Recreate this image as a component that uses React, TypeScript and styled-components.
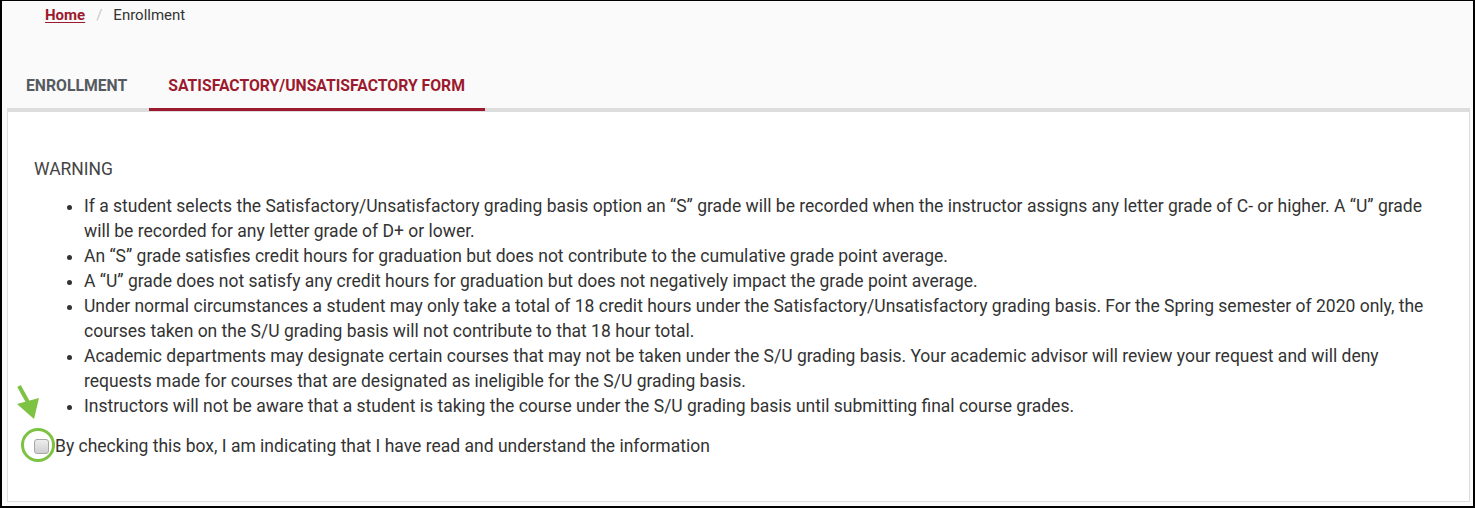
import { useState } from "react"
import styled, { createGlobalStyle } from "styled-components"

const GlobalStyle = createGlobalStyle`
	html, body {
		margin: 0;
		padding: 0;
		background: #ffffff;
	}
	* {
		box-sizing: border-box;
	}
`

const Frame = styled.div`
	position: relative;
	width: 1475px;
	height: 508px;
	border: 2px solid #000;
	border-top-width: 1px;
	background-color: #fafafa;
	font-family: Roboto, "Liberation Sans", sans-serif;
	overflow: hidden;
`
const Breadcrumb = styled.nav`
	display: flex;
	align-items: center;
	height: 28px;
	padding-left: 43px;
	font-size: 15px;
	color: #333;
`
const CrumbLink = styled.a`
	color: #9c1a2e;
	font-weight: 700;
	text-decoration: underline;
	text-underline-offset: 2px;
`
const Separator = styled.span`
	color: #c8c8c8;
	margin: 0 11px;
`
const TabList = styled.div`
	display: flex;
	gap: 2px;
	margin: 36px 3px 0 5px;
	border-bottom: 4px solid #dddddd;
`
const Tab = styled.div<{ $active?: boolean }>`
	padding: 0 20px 2px 19px;
	height: 46px;
	display: flex;
	align-items: center;
	font-size: 15.75px;
	font-weight: 700;
	color: ${(p) => (p.$active ? "#9c1a2e" : "#555a5f")};
	margin-bottom: -3px;
	border-bottom: 3px solid ${(p) => (p.$active ? "#9c1a2e" : "transparent")};
	cursor: pointer;
`
const Panel = styled.div`
	margin: 0 3px 0 5px;
	height: 390px;
	background: #ffffff;
	border: 1px solid #dddddd;
	border-top: none;
	padding: 45px 26px 0 26px;
	font-size: 17.5px;
	line-height: 25px;
	color: #333;
`
const Heading = styled.div`
	color: #444;
`
const List = styled.ul`
	margin: 12px 0 0 0;
	padding-left: 50px;
`
const Item = styled.li`
	padding: 0;
`
const CheckRow = styled.label`
	display: flex;
	align-items: center;
	margin-top: 15px;
	gap: 6px;
	cursor: pointer;
`
const Box = styled.input`
	appearance: none;
	margin: 0;
	width: 15px;
	height: 15px;
	border: 1px solid #a6a6a6;
	border-radius: 3px;
	background: linear-gradient(#ededed, #cfcfcf);
	&:checked {
		background: linear-gradient(#d7d7d7, #bdbdbd);
	}
`
const Annotation = styled.svg`
	position: absolute;
	left: -2px;
	top: 379px;
	pointer-events: none;
`

const items = [
	"If a student selects the Satisfactory/Unsatisfactory grading basis option an \u201cS\u201d grade will be recorded when the instructor assigns any letter grade of C- or higher. A \u201cU\u201d grade will be recorded for any letter grade of D+ or lower.",
	"An \u201cS\u201d grade satisfies credit hours for graduation but does not contribute to the cumulative grade point average.",
	"A \u201cU\u201d grade does not satisfy any credit hours for graduation but does not negatively impact the grade point average.",
	"Under normal circumstances a student may only take a total of 18 credit hours under the Satisfactory/Unsatisfactory grading basis. For the Spring semester of 2020 only, the courses taken on the S/U grading basis will not contribute to that 18 hour total.",
	"Academic departments may designate certain courses that may not be taken under the S/U grading basis. Your academic advisor will review your request and will deny requests made for courses that are designated as ineligible for the S/U grading basis.",
	"Instructors will not be aware that a student is taking the course under the S/U grading basis until submitting final course grades."
]

export default function App() {
	const [checked, setChecked] = useState(false)

	return (
		<>
			<GlobalStyle />
			<Frame>
				<Breadcrumb>
					<CrumbLink>Home</CrumbLink>
					<Separator>/</Separator>
					<span>Enrollment</span>
				</Breadcrumb>
				<TabList>
					<Tab>ENROLLMENT</Tab>
					<Tab $active>SATISFACTORY/UNSATISFACTORY FORM</Tab>
				</TabList>
				<Panel>
					<Heading>WARNING</Heading>
					<List>
						{items.map((text) => (
							<Item key={text}>{text}</Item>
						))}
					</List>
					<CheckRow>
						<Box
							type="checkbox"
							checked={checked}
							onChange={(e) => setChecked(e.target.checked)}
						/>
						By checking this box, I am indicating that I have read and understand the information
					</CheckRow>
				</Panel>
				{/* green callout pointing at the checkbox */}
				<Annotation width="70" height="90" viewBox="0 0 70 90">
					<line x1="19" y1="6" x2="29" y2="24" stroke="#7dc242" strokeWidth="4" />
					<polygon points="17,24 39,18 34,39" fill="#7dc242" />
					<circle cx="38" cy="65" r="15.5" fill="none" stroke="#7dc242" strokeWidth="3" />
				</Annotation>
			</Frame>
		</>
	)
}
